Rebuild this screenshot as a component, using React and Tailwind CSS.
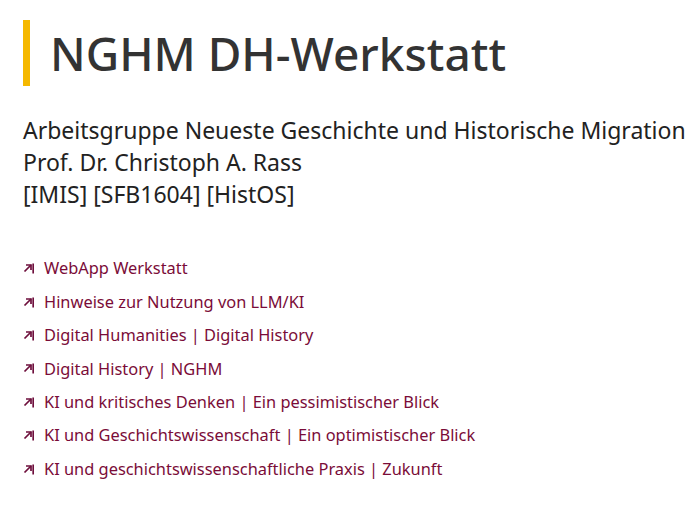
// startseite der NGHM DH-Werkstatt
// titel mit gelbem balken, untertitel, dann liste mit links

const links = [
  "WebApp Werkstatt",
  "Hinweise zur Nutzung von LLM/KI",
  "Digital Humanities | Digital History",
  "Digital History | NGHM",
  "KI und kritisches Denken | Ein pessimistischer Blick",
  "KI und Geschichtswissenschaft | Ein optimistischer Blick",
  "KI und geschichtswissenschaftliche Praxis | Zukunft",
];

// kleiner pfeil fuer externe links
function ArrowIcon() {
  return (
    <svg
      width="11"
      height="11"
      viewBox="0 0 11 11"
      fill="none"
      stroke="#6e0f3c"
      strokeWidth="1.7"
      className="shrink-0"
    >
      <polyline points="3,2 8,2 8,7" />
      <line x1="8" y1="2" x2="1.5" y2="8.5" />
      <line x1="10.2" y1="0.5" x2="10.2" y2="10.5" />
    </svg>
  );
}

export default function App() {
  return (
    <div
      className="min-h-screen bg-white pl-[23px] pt-[20px]"
      style={{ fontFamily: '"Noto Sans", "Open Sans", sans-serif' }}
    >
      <div className="flex h-[66px] items-center border-l-[7px] border-[#f5b800] pl-[20px]">
        <h1 className="text-[46px] font-medium leading-none text-[#333333]">
          NGHM DH-Werkstatt
        </h1>
      </div>

      <div className="mt-[28px] text-[23px] leading-[32px] text-[#222222]">
        <div>Arbeitsgruppe Neueste Geschichte und Historische Migration</div>
        <div>Prof. Dr. Christoph A. Rass</div>
        <div>[IMIS] [SFB1604] [HistOS]</div>
      </div>

      <ul className="mt-[42px] flex flex-col">
        {links.map((label) => (
          <li key={label} className="flex h-[33.4px] items-center gap-[10px]">
            <ArrowIcon />
            <a href="#" className="text-[16.4px] text-[#7a0c38]">
              {label}
            </a>
          </li>
        ))}
      </ul>
    </div>
  );
}
